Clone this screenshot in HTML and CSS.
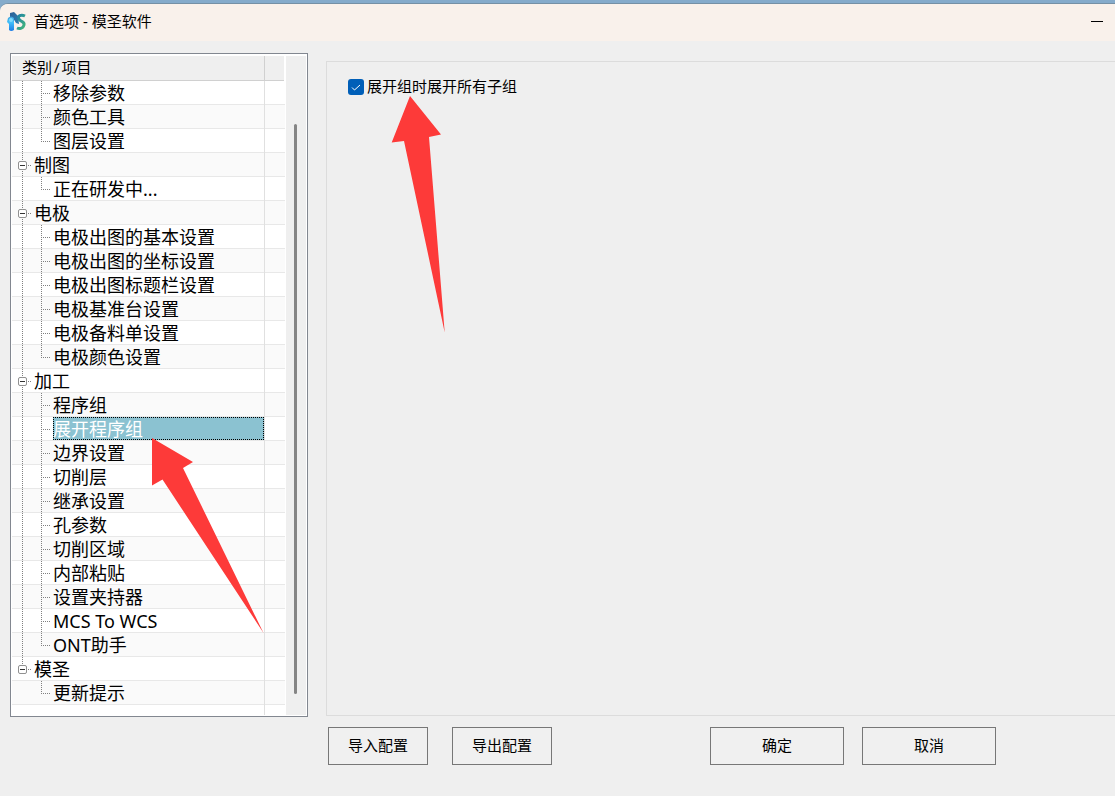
FILE: index.html
```html
<!DOCTYPE html>
<html lang="zh-CN">
<head>
  <meta charset="UTF-8" />
  <meta name="viewport" content="width=device-width, initial-scale=1.0"/>
  <title>首选项 - 模圣软件</title>
  <link rel="stylesheet" href="styles.css">
</head>
<body>

  <div class="window">
    <header class="titlebar">
      <svg class="logo" viewBox="0 0 20 20" aria-hidden="true">
        <defs>
          <linearGradient id="blue" x1="0" y1="0" x2="0" y2="1">
            <stop offset="0" stop-color="#3f9fd8"/>
            <stop offset="0.4" stop-color="#42c0fa"/>
            <stop offset="1" stop-color="#1c7ce6"/>
          </linearGradient>
          <linearGradient id="dark" x1="0" y1="0" x2="1" y2="1">
            <stop offset="0" stop-color="#2c5f94"/>
            <stop offset="1" stop-color="#2a7fb4"/>
          </linearGradient>
          <linearGradient id="green" x1="0" y1="0" x2="1" y2="1">
            <stop offset="0" stop-color="#1d80a8"/>
            <stop offset="1" stop-color="#45b878"/>
          </linearGradient>
        </defs>
        <path d="M3 1 L7 0 L11 4 L12 12 L9 11 L6 6 L3 5 Z" fill="url(#dark)"/>
        <path d="M1 6 Q4 3 7 6 L7 18 Q4 20 2 18 L2 12 L0 10 Z" fill="url(#blue)"/>
        <circle cx="4" cy="8" r="2" fill="#7fdcff"/>
        <path d="M18 4 C14 2 10 4 12 7 C13 10 18 9 17 13 C16 17 12 17 10 16" fill="none" stroke="url(#green)" stroke-width="3"/>
      </svg>
      <h1 class="title">首选项 - 模圣软件</h1>
      <button class="minimize" type="button" aria-label="最小化">
        <svg viewBox="0 0 12 1" aria-hidden="true"><path d="M0 0h12v1H0z"/></svg>
      </button>
    </header>

    <main class="content">
      <nav class="tree" aria-label="类别 / 项目">
        <div class="tree-view">
          <div class="tree-header">
            <span class="column-name">类别<span class="slash">/</span>项目</span>
            <span class="column-rest"></span>
          </div>
          <ul class="tree-list">
            <li class="row"><span class="trunk"></span><span class="branch"></span><a class="label" href="#">移除参数</a><span class="cell"></span></li>
            <li class="row"><span class="trunk"></span><span class="branch"></span><a class="label" href="#">颜色工具</a><span class="cell"></span></li>
            <li class="row"><span class="trunk"></span><span class="branch end"></span><a class="label" href="#">图层设置</a><span class="cell"></span></li>
            <li class="row"><span class="node"><button class="toggle" type="button" aria-label="折叠制图"></button></span><a class="label" href="#">制图</a><span class="cell"></span></li>
            <li class="row"><span class="trunk"></span><span class="branch end"></span><a class="label" href="#">正在研发中...</a><span class="cell"></span></li>
            <li class="row"><span class="node"><button class="toggle" type="button" aria-label="折叠电极"></button></span><a class="label" href="#">电极</a><span class="cell"></span></li>
            <li class="row"><span class="trunk"></span><span class="branch"></span><a class="label" href="#">电极出图的基本设置</a><span class="cell"></span></li>
            <li class="row"><span class="trunk"></span><span class="branch"></span><a class="label" href="#">电极出图的坐标设置</a><span class="cell"></span></li>
            <li class="row"><span class="trunk"></span><span class="branch"></span><a class="label" href="#">电极出图标题栏设置</a><span class="cell"></span></li>
            <li class="row"><span class="trunk"></span><span class="branch"></span><a class="label" href="#">电极基准台设置</a><span class="cell"></span></li>
            <li class="row"><span class="trunk"></span><span class="branch"></span><a class="label" href="#">电极备料单设置</a><span class="cell"></span></li>
            <li class="row"><span class="trunk"></span><span class="branch end"></span><a class="label" href="#">电极颜色设置</a><span class="cell"></span></li>
            <li class="row"><span class="node"><button class="toggle" type="button" aria-label="折叠加工"></button></span><a class="label" href="#">加工</a><span class="cell"></span></li>
            <li class="row"><span class="trunk"></span><span class="branch"></span><a class="label" href="#">程序组</a><span class="cell"></span></li>
            <li class="row"><span class="trunk"></span><span class="branch"></span><a class="label selected" href="#" aria-current="true">展开程序组</a><span class="cell"></span></li>
            <li class="row"><span class="trunk"></span><span class="branch"></span><a class="label" href="#">边界设置</a><span class="cell"></span></li>
            <li class="row"><span class="trunk"></span><span class="branch"></span><a class="label" href="#">切削层</a><span class="cell"></span></li>
            <li class="row"><span class="trunk"></span><span class="branch"></span><a class="label" href="#">继承设置</a><span class="cell"></span></li>
            <li class="row"><span class="trunk"></span><span class="branch"></span><a class="label" href="#">孔参数</a><span class="cell"></span></li>
            <li class="row"><span class="trunk"></span><span class="branch"></span><a class="label" href="#">切削区域</a><span class="cell"></span></li>
            <li class="row"><span class="trunk"></span><span class="branch"></span><a class="label" href="#">内部粘贴</a><span class="cell"></span></li>
            <li class="row"><span class="trunk"></span><span class="branch"></span><a class="label" href="#">设置夹持器</a><span class="cell"></span></li>
            <li class="row"><span class="trunk"></span><span class="branch"></span><a class="label" href="#">MCS To WCS</a><span class="cell"></span></li>
            <li class="row"><span class="trunk"></span><span class="branch end"></span><a class="label" href="#">ONT助手</a><span class="cell"></span></li>
            <li class="row"><span class="node last"><button class="toggle" type="button" aria-label="折叠模圣"></button></span><a class="label" href="#">模圣</a><span class="cell"></span></li>
            <li class="row"><span class="trunk none"></span><span class="branch end"></span><a class="label" href="#">更新提示</a><span class="cell"></span></li>
          </ul>
          <div class="tree-rest"><span class="cell"></span></div>
        </div>
        <div class="scrollbar"><div class="thumb"></div></div>
      </nav>

      <section class="panel">
        <label class="option">
          <input type="checkbox" class="check" checked>
          <span class="option-text">展开组时展开所有子组</span>
        </label>
      </section>

      <footer class="actions">
        <button class="btn" type="button">导入配置</button>
        <button class="btn" type="button">导出配置</button>
        <div class="confirm">
          <button class="btn wide" type="button">确定</button>
          <button class="btn wide" type="button">取消</button>
        </div>
      </footer>

      <!-- arrows pointing at the option and the selected item -->
      <svg class="arrow arrow-option" viewBox="0 0 54 240" aria-hidden="true">
        <path d="M20 0 L51 38.500 L39 41 L54.700 236.500 L14 45 L1.700 46.500 Z"/>
      </svg>
      <svg class="arrow arrow-item" viewBox="0 0 114 196" aria-hidden="true">
        <path d="M2 0 L43 24 L33 30 L113.500 195 L12.500 41.500 L2 47.500 Z"/>
      </svg>
    </main>
  </div>

</body>
</html>
```
FILE: styles.css
```css
* {
  box-sizing: border-box;
}

body {
  margin: 0;
  background: #85abcb;
  color: #000;
  font-family: "Noto Sans", "Noto Sans CJK SC", sans-serif;
  font-size: 15px;
}

button,
input {
  font: inherit;
  color: inherit;
}

.window {
  display: flex;
  flex-direction: column;
  min-height: calc(100vh - 3px);
  margin-top: 3px;
  background: #efefef;
  border-top: 1px solid #7590a5;
  border-top-left-radius: 8px;
  overflow: hidden;
}

/* title bar */
.titlebar {
  display: flex;
  align-items: center;
  height: 37px;
  padding: 0 12px 2px 7px;
  background: #f9f1eb;
}

.logo {
  width: 20px;
  height: 20px;
}

.title {
  flex: 1;
  margin: 0 0 0 7px;
  padding-bottom: 2px;
  font-size: 15px;
  font-weight: 400;
  line-height: 20px;
}

.minimize {
  display: flex;
  align-items: center;
  height: 35px;
  padding: 0;
  border: 0;
  background: none;
}

.minimize svg {
  width: 12px;
  height: 1px;
}

.content {
  position: relative;
  display: grid;
  grid-template-columns: 298px 1fr;
  column-gap: 18px;
  padding: 12px 0 31px 10px;
}

/* category tree */
.tree {
  display: flex;
  gap: 1px;
  padding: 2px 1px 1px;
  border: 1px solid #828790;
  background: #fff;
}

.tree-view {
  flex: 1;
}

.tree-header {
  display: flex;
  height: 25px;
  margin-right: 1px;
  background: #efefef;
  border-bottom: 1px solid #d0d0d0;
}

.column-name {
  flex: 1;
  padding-left: 10px;
  line-height: 22px;
}

.slash {
  padding: 0 2px;
}

.column-rest {
  width: 20px;
  border-left: 1px solid #d0d0d0;
}

.tree-list {
  margin: 0;
  padding: 0;
  list-style: none;
}

.row {
  display: flex;
  height: 24px;
  box-shadow: inset 0 -1px #e8e8e8;
}

.row:nth-child(even) {
  background: #fafafa;
  box-shadow: inset 0 -1px #e8e8e8;
}

.trunk {
  width: 19px;
  background: repeating-linear-gradient(#808080 0 1px, transparent 1px 2px) 10px 0 / 1px 100% no-repeat;
}

.trunk.none {
  background: none;
}

.branch {
  width: 22px;
  background:
    repeating-linear-gradient(#808080 0 1px, transparent 1px 2px) 10px 0 / 1px 100% no-repeat,
    repeating-linear-gradient(90deg, #808080 0 1px, transparent 1px 2px) 10px 12px / 9px 1px no-repeat;
}

.branch.end {
  background-size: 1px 13px, 9px 1px;
}

.node {
  width: 22px;
  padding: 8px 0 0 6px;
  background:
    repeating-linear-gradient(#808080 0 1px, transparent 1px 2px) 10px 0 / 1px 100% no-repeat,
    repeating-linear-gradient(90deg, #808080 0 1px, transparent 1px 2px) 16px 12px / 3px 1px no-repeat;
}

.node.last {
  background-size: 1px 12px, 3px 1px;
}

.toggle {
  display: block;
  width: 9px;
  height: 9px;
  padding: 0;
  border: 1px solid #919191;
  border-radius: 2px;
  background: linear-gradient(#333, #333) center / 5px 1px no-repeat #fff;
}

.label {
  flex: 1;
  height: 24px;
  color: #000;
  font-size: 18px;
  line-height: 24px;
  text-decoration: none;
  white-space: nowrap;
}

.label.selected {
  height: 23px;
  color: #fff;
  background: #8bc2d1;
  outline: 1px dotted #000;
  outline-offset: -1px;
}

.cell {
  width: 21px;
  border-left: 1px solid #e0e0e0;
}

.tree-rest {
  display: flex;
  justify-content: flex-end;
  height: 10px;
}

.scrollbar {
  width: 20px;
  padding: 68px 9px 21px 8px;
  background: #efefef;
}

.thumb {
  height: 100%;
  border-radius: 2px;
  background: #858585;
}

/* settings panel */
.panel {
  margin: 8px 0 1px;
  padding: 14px 21px;
  border: 1px solid #dcdcdc;
  border-right: 0;
}

.option {
  display: inline-flex;
  align-items: center;
  gap: 3px;
  line-height: 20px;
}

.option-text {
  padding-bottom: 2px;
}

.check {
  appearance: none;
  width: 16px;
  height: 16px;
  margin: 0;
  border-radius: 3px;
  background: #005fb8;
}

.check:checked {
  background: #005fb8 url("data:image/svg+xml,%3Csvg xmlns='http://www.w3.org/2000/svg' viewBox='0 0 16 16'%3E%3Cpath d='M4 8.500l2.500 2.500 5.500-5' fill='none' stroke='white'/%3E%3C/svg%3E") center / 16px 16px;
}

.actions {
  grid-column: 2;
  display: flex;
  gap: 24px;
  padding: 10px 119px 0 2px;
}

.confirm {
  display: flex;
  gap: 18px;
  margin-left: auto;
}

.btn {
  width: 100px;
  height: 38px;
  padding: 0 0 2px;
  border: 1px solid #777;
  background: #f0f0f0;
  line-height: 20px;
}

.btn.wide {
  width: 134px;
}

.arrow {
  position: absolute;
  fill: #fd3a39;
  overflow: visible;
  pointer-events: none;
}

.arrow-option {
  left: 390px;
  top: 55px;
  width: 54px;
  height: 240px;
}

.arrow-item {
  left: 150px;
  top: 397px;
  width: 114px;
  height: 196px;
}
```
